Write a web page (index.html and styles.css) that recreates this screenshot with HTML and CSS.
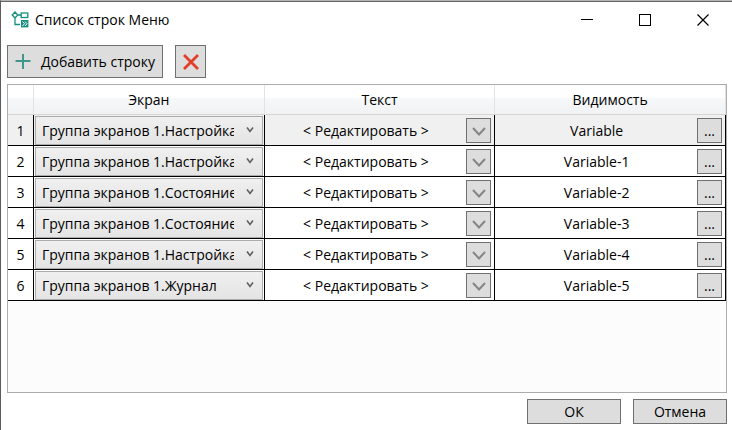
FILE: index.html
```html
<!DOCTYPE html>
<html lang="ru">
<head>
  <meta charset="UTF-8">
  <title>Список строк Меню</title>
  <link rel="stylesheet" href="styles.css">
</head>
<body>
  <div class="window">
    <header class="title-bar">
      <svg class="app-icon" width="18" height="18" viewBox="0 0 18 18" fill="none" stroke="#168f80" stroke-width="1.3">
        <path d="M4 1 L6.8 4 L4 7 L1.2 4 Z M7 4 H10 M4 7 V13.5 H9"/>
        <rect x="10.2" y="2" width="6.6" height="4.5"/>
        <rect x="10" y="9" width="7.4" height="7.4" fill="#168f80" stroke="none"/>
        <path d="M11.5 10.5 L13.5 12.7 L11.5 15 M14 10.5 L16 12.7 L14 15" stroke="#fff" stroke-width="1"/>
      </svg>
      <h1>Список строк Меню</h1>
      <div class="window-buttons">
        <button aria-label="Свернуть"><svg width="12" height="12" viewBox="0 0 12 12" stroke="#000"><path d="M0 5.5 H12"/></svg></button>
        <button aria-label="Развернуть"><svg width="12" height="12" viewBox="0 0 12 12" stroke="#000" fill="none"><rect x="0.5" y="0.5" width="11" height="11"/></svg></button>
        <button aria-label="Закрыть"><svg width="12" height="12" viewBox="0 0 12 12" stroke="#000" stroke-width="1.2"><path d="M0.5 0.5 L11.5 11.5 M11.5 0.5 L0.5 11.5"/></svg></button>
      </div>
    </header>

    <div class="toolbar">
      <button class="btn add-button">
        <svg width="16" height="16" viewBox="0 0 16 16" stroke="#3f978b" stroke-width="2"><path d="M8 0 V15 M0.5 7 H15.5"/></svg>
        Добавить строку
      </button>
      <button class="btn delete-button" aria-label="Удалить строку">
        <svg width="16" height="16" viewBox="0 0 16 16" stroke="#e23d28" stroke-width="2.8"><path d="M1 1 L15 15 M15 1 L1 15"/></svg>
      </button>
    </div>

    <div class="grid-box">
      <table class="rows">
        <thead>
          <tr>
            <th class="num-col"></th>
            <th>Экран</th>
            <th>Текст</th>
            <th>Видимость</th>
          </tr>
        </thead>
        <tbody id="rows">
          <!-- строки добавляет скрипт -->
        </tbody>
      </table>
    </div>

    <footer class="footer">
      <button class="btn dialog-button">ОК</button>
      <button class="btn dialog-button">Отмена</button>
    </footer>
  </div>

  <script>
    const rows = [
      ["Настройка", "Variable"],
      ["Настройка", "Variable-1"],
      ["Состояние", "Variable-2"],
      ["Состояние", "Variable-3"],
      ["Настройка", "Variable-4"],
      ["Журнал", "Variable-5"]
    ];

    document.getElementById("rows").innerHTML = rows.map(([screen, variable], i) => `
      <tr class="${i === 0 ? "current" : ""}">
        <td class="num-col">${i + 1}</td>
        <td>
          <div class="screen-select">
            <select aria-label="Экран, строка ${i + 1}">
              <option>Группа экранов 1.${screen}</option>
            </select>
            <svg width="8" height="6" viewBox="0 0 8 6" fill="none" stroke="#606060" stroke-width="1.6"><path d="M1 0.5 L4 4.5 L7 0.5"/></svg>
          </div>
        </td>
        <td>
          <div class="cell">
            <span>&lt; Редактировать &gt;</span>
            <button class="btn cell-button arrow" aria-label="Редактировать текст">
              <svg width="14" height="9" viewBox="0 0 14 9" fill="none" stroke="#858585" stroke-width="2"><path d="M1 1 L7 7.5 L13 1"/></svg>
            </button>
          </div>
        </td>
        <td>
          <div class="cell">
            <span>${variable}</span>
            <button class="btn cell-button">...</button>
          </div>
        </td>
      </tr>`).join("");
  </script>
</body>
</html>
```
FILE: styles.css
```css
* {
  box-sizing: border-box;
}
body {
  margin: 0;
  background: #fff;
  color: #000;
  font-family: "Open Sans", "Noto Sans", sans-serif;
  font-size: 14px;
}
button,
select {
  font: inherit;
  color: inherit;
}
svg {
  display: block;
  flex: none;
}
.window {
  display: flex;
  flex-direction: column;
  min-height: 100vh;
  background: linear-gradient(#666 1px, #fff 1px);
  border-top: 1px solid #b4b4b4;
  border-left: 1px solid #5c5c5c;
}

/* title bar */
.title-bar {
  display: flex;
  align-items: center;
  height: 37px;
  padding-left: 10px;
}
.title-bar h1 {
  flex: 1;
  margin: 0 0 0 6px;
  font-size: 14px;
  font-weight: normal;
}
.window-buttons {
  display: flex;
}
.window-buttons button {
  display: flex;
  align-items: center;
  justify-content: center;
  width: 58px;
  height: 36px;
  padding: 0;
  background: none;
  border: none;
}

/* buttons */
.btn {
  display: flex;
  align-items: center;
  justify-content: center;
  padding: 0;
  background: #ddd;
  border: 1px solid #707070;
  border-radius: 0;
  white-space: nowrap;
}
.toolbar {
  display: flex;
  gap: 12px;
  padding: 7px 6px 6px;
}
.add-button {
  gap: 10px;
  width: 156px;
  height: 33px;
}
.delete-button {
  width: 31px;
  height: 33px;
}

/* table */
.grid-box {
  flex: 1;
  margin: 0 5px 0 6px;
  background: #fcfcfc;
  border: 1px solid #acacac;
}
.rows {
  width: 100%;
  table-layout: fixed;
  border-collapse: separate;
  border-spacing: 0;
}
.rows th {
  height: 30px;
  padding: 0;
  background: linear-gradient(#fff 45%, #f7f8fa 45%, #f1f2f4);
  border-right: 1px solid #e2e3e5;
  border-bottom: 1px solid #d5d5d5;
  font-weight: normal;
}
.rows td {
  height: 31px;
  padding: 0 1px;
  background: #fff;
  border-right: 1px solid #000;
  border-bottom: 1px solid #000;
}
.rows .current td {
  background: #f0f0f0;
}
.rows .num-col {
  width: 26px;
  text-align: center;
}
.screen-select {
  position: relative;
}
.screen-select select {
  display: block;
  width: 100%;
  height: 29px;
  padding: 0 28px 0 6px;
  appearance: none;
  background: linear-gradient(#f0f0f0, #e4e4e4);
  border: 1px solid #acacac;
  border-radius: 0;
}
.screen-select svg {
  position: absolute;
  top: 11px;
  right: 9px;
  pointer-events: none;
}
.cell {
  display: flex;
  align-items: center;
  padding-right: 2px;
}
.cell span {
  flex: 1;
  text-align: center;
}
.cell-button {
  width: 25px;
  height: 25px;
}
.arrow {
  padding-top: 3px;
}

/* dialog buttons */
.footer {
  display: flex;
  justify-content: flex-end;
  gap: 12px;
  padding: 6px 5px;
}
.dialog-button {
  width: 94px;
  height: 25px;
}
```
